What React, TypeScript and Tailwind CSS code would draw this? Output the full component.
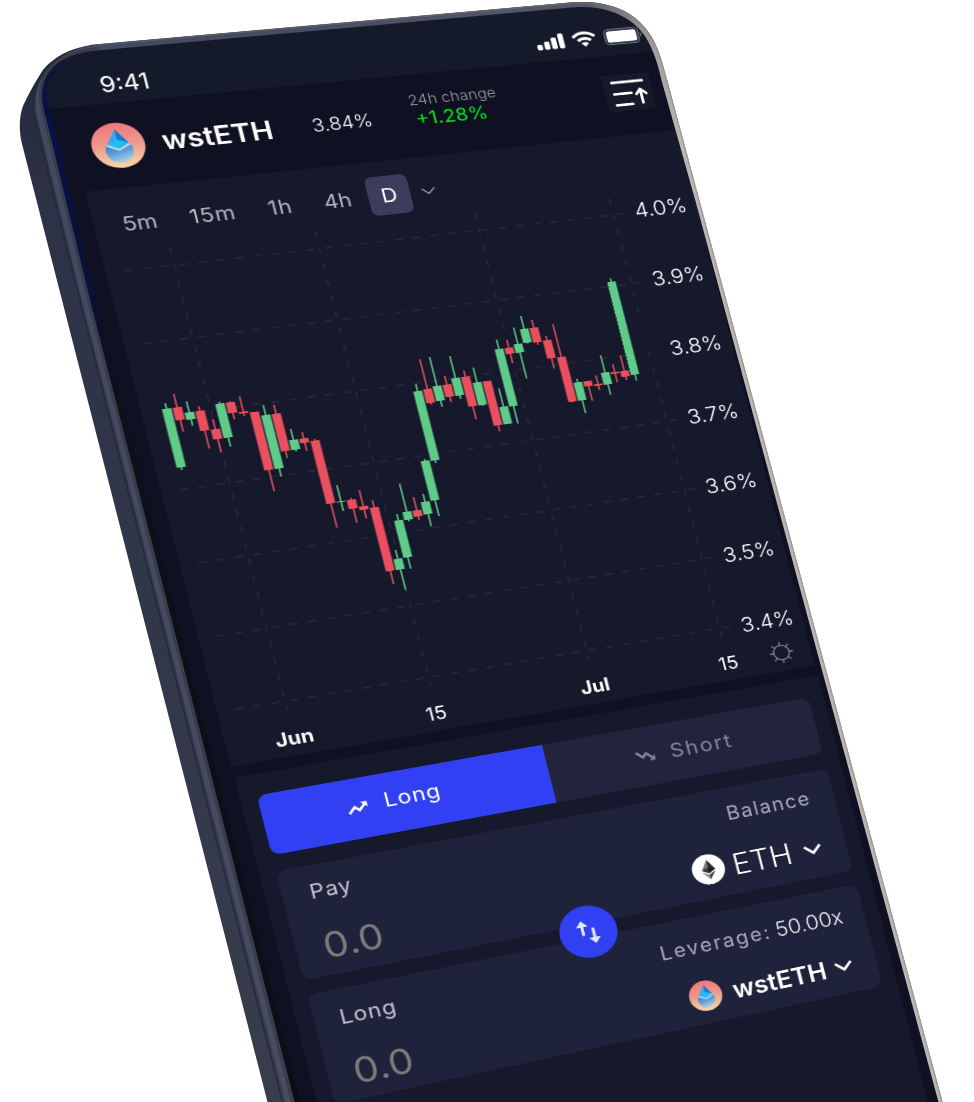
import React from "react";

type Point = [number, number];

/* The plot area in screen pixels, and where its four corners land once the phone is tilted. */
const PLOT = { x: 46, y: 248, width: 500, height: 486 };
const PLOT_CORNERS: Point[] = [
  [124, 271],
  [626, 213.5],
  [732, 626.3],
  [235, 709.5],
];

/* CSS transform that maps a width × height rectangle onto a quadrilateral. */
function perspectiveOnto([p0, p1, p2, p3]: Point[], width: number, height: number) {
  const dx1 = p1[0] - p2[0];
  const dx2 = p3[0] - p2[0];
  const dy1 = p1[1] - p2[1];
  const dy2 = p3[1] - p2[1];
  const sx = p0[0] - p1[0] + p2[0] - p3[0];
  const sy = p0[1] - p1[1] + p2[1] - p3[1];
  const det = dx1 * dy2 - dx2 * dy1;
  const g = (sx * dy2 - dx2 * sy) / det;
  const h = (dx1 * sy - sx * dy1) / det;
  const a = (p1[0] - p0[0] + g * p1[0]) / width;
  const b = (p3[0] - p0[0] + h * p3[0]) / height;
  const d = (p1[1] - p0[1] + g * p1[1]) / width;
  const e = (p3[1] - p0[1] + h * p3[1]) / height;
  return `matrix3d(${[a, d, 0, g / width, b, e, 0, h / height, 0, 0, 1, 0, p0[0], p0[1], 0, 1].join(",")})`;
}

const screenTransform = `${perspectiveOnto(PLOT_CORNERS, PLOT.width, PLOT.height)} translate(${-PLOT.x}px, ${-PLOT.y}px)`;

/* [direction, wick top, body top, body bottom, wick bottom] */
type Candle = ["up" | "down", number, number, number, number];
const candles: Candle[] = [
  ["up", 148, 154, 219, 222],
  ["down", 139, 154, 168, 181],
  ["up", 149, 161, 169, 176],
  ["down", 156, 161, 183, 203],
  ["down", 172, 183, 194, 209],
  ["up", 154, 156, 194, 204],
  ["down", 155, 156, 168, 175],
  ["down", 151, 168, 170, 173],
  ["down", 170, 170, 235, 259],
  ["up", 164, 175, 235, 244],
  ["down", 165, 175, 217, 225],
  ["up", 194, 206, 217, 219],
  ["down", 199, 206, 211, 220],
  ["down", 208, 210, 281, 308],
  ["up", 262, 280, 281, 291],
  ["down", 278, 280, 290, 306],
  ["down", 271, 289, 293, 303],
  ["down", 284, 292, 364, 379],
  ["up", 342, 352, 364, 387],
  ["up", 303, 310, 352, 365],
  ["up", 270, 302, 311, 313],
  ["down", 287, 302, 309, 313],
  ["up", 285, 294, 308, 322],
  ["up", 247, 249, 294, 312],
  ["up", 163, 171, 250, 253],
  ["down", 136, 170, 186, 188],
  ["up", 135, 168, 185, 192],
  ["down", 158, 168, 182, 188],
  ["up", 137, 162, 182, 186],
  ["down", 155, 162, 196, 211],
  ["up", 153, 170, 196, 197],
  ["down", 170, 170, 221, 228],
  ["up", 180, 201, 221, 221],
  ["up", 125, 136, 202, 222],
  ["down", 127, 136, 143, 154],
  ["up", 114, 133, 143, 173],
  ["up", 102, 117, 133, 134],
  ["down", 108, 117, 134, 137],
  ["down", 128, 133, 154, 166],
  ["down", 116, 154, 206, 207],
  ["up", 181, 185, 206, 221],
  ["down", 185, 185, 191, 208],
  ["down", 180, 190, 192, 197],
  ["up", 158, 178, 192, 204],
  ["down", 170, 179, 181, 191],
  ["down", 161, 179, 186, 190],
  ["up", 72, 76, 185, 192],
];

const rates = ["4.0%", "3.9%", "3.8%", "3.7%", "3.6%", "3.5%", "3.4%"];

function DeviceBody() {
  return (
    <svg className="absolute inset-0" width="974" height="1102" viewBox="0 0 974 1102" fill="none">
      <defs>
        <linearGradient id="side" x1="0" y1="60" x2="0" y2="1102" gradientUnits="userSpaceOnUse">
          <stop offset="0" stopColor="#25293b" />
          <stop offset="0.15" stopColor="#2d3246" />
          <stop offset="0.5" stopColor="#31374a" />
          <stop offset="1" stopColor="#383d4d" />
        </linearGradient>
        <linearGradient id="rim" x1="60" y1="0" x2="680" y2="0" gradientUnits="userSpaceOnUse">
          <stop offset="0" stopColor="#434960" />
          <stop offset="0.3" stopColor="#454b61" />
          <stop offset="0.85" stopColor="#55586a" />
          <stop offset="0.94" stopColor="#96948f" />
          <stop offset="1" stopColor="#bbb8b4" />
        </linearGradient>
        <linearGradient id="outline" x1="60" y1="0" x2="680" y2="0" gradientUnits="userSpaceOnUse">
          <stop offset="0" stopColor="#5b5e69" stopOpacity="0.6" />
          <stop offset="0.85" stopColor="#66676c" />
          <stop offset="1" stopColor="#a09e9b" />
        </linearGradient>
      </defs>
      <path
        d="M268 1104L21.5 142C19 130 19 117 23 106C28 95 34 84 41 73C50 59 70 47 97 44.3L566 3C590 0.500 607 3 624 11C641 20 650 32 657 48C662 60 664 70 667 80L700 203L943 1104Z"
        fill="url(#side)"
      />
      <path
        d="M286 1104L81 297L36.500 116C34 100 35 88 44 75C53 60 73 47.500 97 44.600L566 3C590 0.500 607 3 624 11C641 20 650 32 657 48C662 60 664 70 667 80L700 203L943 1104Z"
        fill="url(#rim)"
      />
      <path d="M283 1104L79 297L34 116C32 100 33 88 42 75" stroke="#262a3a" strokeWidth="1.500" />
      <path d="M293 1104L88 298L45 120C40 104 39 94 42 84C47 69 60 54 97 48" stroke="#3a3d48" strokeWidth="3" />
      <path
        d="M97 45L566 3.500C590 1 607 3.500 624 11.500C641 20.500 650 32.500 656.500 48C661.500 60 663.500 70 666.500 80L699.500 203L942.500 1104"
        stroke="url(#outline)"
        strokeWidth="1.500"
      />
    </svg>
  );
}

function GlassEdge() {
  return (
    <svg className="absolute inset-0" width="974" height="1102" viewBox="0 0 974 1102" fill="none">
      <defs>
        <linearGradient id="glint" x1="0" y1="60" x2="0" y2="1102" gradientUnits="userSpaceOnUse">
          <stop offset="0" stopColor="#0a1140" stopOpacity="0.300" />
          <stop offset="0.06" stopColor="#08104a" />
          <stop offset="0.22" stopColor="#0a1038" />
          <stop offset="0.33" stopColor="#0d0f1a" />
          <stop offset="1" stopColor="#0c0e16" />
        </linearGradient>
      </defs>
      <path d="M295 1104L90 300L46.500 120C42 105 41 95 43 86C45 77 50 68 58 61" stroke="url(#glint)" strokeWidth="11" />
    </svg>
  );
}

function LidoLogo({ className, id }: { className: string; id: string }) {
  return (
    <svg className={className} viewBox="0 0 50 50">
      <defs>
        <linearGradient id={`${id}-bg`} x1="0" y1="0" x2="0" y2="1">
          <stop offset="0.050" stopColor="#ee7c7e" />
          <stop offset="0.500" stopColor="#ee9a8c" />
          <stop offset="1" stopColor="#f8d9a8" />
        </linearGradient>
        <linearGradient id={`${id}-drop`} x1="0" y1="0" x2="0.300" y2="1">
          <stop offset="0" stopColor="#2f7fd0" />
          <stop offset="0.500" stopColor="#5d9fdb" />
          <stop offset="1" stopColor="#a9cbe4" />
        </linearGradient>
      </defs>
      <circle cx="25" cy="25" r="25" fill={`url(#${id}-bg)`} />
      <path d="M13.200 25C10 33 14 44 25 44C36 44 40 33 36.800 25L25 31Z" fill={`url(#${id}-drop)`} />
      <path d="M25 7L15 23L25 28.500Z" fill="#35a8f0" />
      <path d="M25 7L35 23L25 28.500Z" fill="#1478cc" />
      <path d="M15 23L25 18.500L35 23L25 28.500Z" fill="#22bdf5" />
      <path d="M14.600 23.600L25 29L35.400 23.600L36.300 25.200L25 31L13.700 25.200Z" fill="#a8e4fb" />
    </svg>
  );
}

function EthLogo() {
  return (
    <svg className="-mt-[2px] size-[34px]" viewBox="0 0 34 34">
      <circle cx="17" cy="17" r="17" fill="#fff" />
      <path d="M17 6L10 17.500L17 21.500Z" fill="#77777a" />
      <path d="M17 6L24 17.500L17 21.500Z" fill="#2c2c30" />
      <path d="M17 14.500L10 17.500L17 21.500L24 17.500Z" fill="#18181b" fillOpacity="0.650" />
      <path d="M10 19.300L17 23.300V28.500Z" fill="#8b8b8e" />
      <path d="M24 19.300L17 23.300V28.500Z" fill="#3b3b3f" />
    </svg>
  );
}

function Chevron({ className }: { className: string }) {
  return (
    <svg className={className} viewBox="0 0 20 12" fill="none" stroke="currentColor">
      <path d="M1.500 1.500L10 9.500L18.500 1.500" />
    </svg>
  );
}

function TrendIcon({ className }: { className: string }) {
  return (
    <svg className={className} viewBox="0 0 20 13" fill="none" stroke="currentColor" strokeWidth="2.600">
      <path d="M1 11.500L7.200 5.200L11.200 9.200L17.500 2.800" />
      <path d="M13.200 0.500H19.500V6.800Z" fill="currentColor" stroke="none" />
    </svg>
  );
}

function StatusBar() {
  return (
    <div className="flex h-16 items-center bg-[#151a2a] pt-5 pl-[67px] text-white">
      <span className="w-[432px] pt-[3px] text-[24px] leading-none">9:41</span>
      <svg className="h-[18px] w-[30px]" viewBox="0 0 30 18" fill="currentColor">
        <rect x="0" y="11" width="5.600" height="6.500" rx="1.800" />
        <rect x="7.700" y="8" width="5.600" height="9.500" rx="1.800" />
        <rect x="15.400" y="4" width="5.600" height="13.500" rx="1.800" />
        <rect x="23.100" y="0" width="5.600" height="17.500" rx="1.800" />
      </svg>
      <svg className="ml-[7px] h-[18px] w-[26px]" viewBox="0 0 26 18" fill="none" stroke="currentColor" strokeWidth="3.300">
        <path d="M1.500 6.500C8 0.200 18 0.200 24.500 6.500" />
        <path d="M6.200 11C10 7.400 16 7.400 19.800 11" />
        <path d="M9.200 14.200C11.300 12.300 14.700 12.300 16.800 14.200L13 18Z" fill="currentColor" stroke="none" />
      </svg>
      <svg className="ml-2 h-[19px] w-[41px]" viewBox="0 0 41 19" fill="none">
        <rect x="0.700" y="0.700" width="35.600" height="17.600" rx="4.500" stroke="#6f727d" strokeWidth="1.300" />
        <rect x="2.700" y="2.700" width="31.600" height="13.600" rx="3" fill="#fff" />
        <path d="M38 6.500C40 7.500 40 11.500 38 12.500Z" fill="#6f727d" />
      </svg>
    </div>
  );
}

function Header() {
  return (
    <header className="grid h-[94px] grid-cols-[66.5px_145px_99.5px_91px_1fr] items-center pl-[45px] leading-none">
      <LidoLogo id="header-logo" className="size-[50px]" />
      <span className="text-[28.3px] font-semibold text-white">wstETH</span>
      <span className="pt-px text-[19.8px] font-light text-white">3.84%</span>
      <div className="-mt-[14px] text-center">
        <div className="h-[22px] pr-0.5 text-[16px] leading-[22px] font-light whitespace-nowrap text-[#9a9aa3]">24h change</div>
        <div className="h-[22px] pr-3 text-[20.5px] leading-[22px] text-[#00e61b]">+1.28%</div>
      </div>
      <div className="-mt-[5px] ml-[109px] h-[43px] w-[50px] bg-[#141a29]">
        <svg className="size-full text-white" viewBox="0 0 50 43" fill="none" stroke="currentColor" strokeWidth="3" strokeLinecap="round" strokeLinejoin="round">
          <path d="M9.500 9H41.500M9.500 22.500H27.500M9.500 35.500H26.500M37.500 35V19M32.500 24.500L37.500 19L43 24.500" />
        </svg>
      </div>
    </header>
  );
}

function CandleChart() {
  return (
    <svg className="h-[528px] w-[524px] shrink-0" viewBox="-17 -29 524 528">
      <g stroke="#292b3c" strokeWidth="1.400">
        {rates.map((rate, i) => (
          <path key={rate} d={`M0 ${i * 81}H${rate === "3.8%" ? 470 : 508}`} strokeDasharray="8 9.500" />
        ))}
        {[47.5, 187.5, 347.5].map((x) => (
          <path key={x} d={`M${x} -20V497`} strokeDasharray="7.500 10.800" />
        ))}
        <path d="M487 -20V116M487 160V497" strokeDasharray="7.500 10.800" />
      </g>
      {candles.map(([direction, wickTop, bodyTop, bodyBottom, wickBottom], i) => {
        const x = 7 + i * 10;
        return (
          <g key={i} fill={direction === "up" ? "#5fcb89" : "#e94f5e"}>
            <rect x={x - 0.75} y={wickTop} width="1.500" height={wickBottom - wickTop} />
            <rect x={x - 4.4} y={bodyTop} width="8.800" height={bodyBottom - bodyTop} />
          </g>
        );
      })}
    </svg>
  );
}

function ChartPanel() {
  return (
    <section className="ml-[29px] h-[636px] w-[592px] bg-[#16182b] pt-[17px]">
      <div className="grid h-11 grid-cols-[63.5px_75.5px_54.5px_44px_42px_40px] items-center pl-[26.5px] text-[22px] text-[#b2b4be]">
        <span>5m</span>
        <span className="tracking-[0.8px]">15m</span>
        <span className="tracking-[0.8px]">1h</span>
        <span>4h</span>
        <span className="flex h-full items-center justify-center rounded-[7px] bg-[#3c3d5d] text-white">D</span>
        <Chevron className="ml-[11px] h-[9px] w-[15px] stroke-[1.7]" />
      </div>
      <div className="flex">
        <CandleChart />
        <div className="-mt-[14px] pl-[2.5px] text-[23px] font-light text-white">
          {rates.map((rate) => (
            <div key={rate} className="flex h-[81.5px] items-center">
              {rate}
            </div>
          ))}
        </div>
      </div>
      <div className="mt-[-16px] grid h-7 grid-cols-[146.5px_156px_144.5px_54.5px_26px] items-center pl-[46.5px] text-[20px] text-white">
        <span className="font-bold">Jun</span>
        <span>15</span>
        <span className="font-bold">Jul</span>
        <span>15</span>
        <svg className="-mt-1 size-[26px] text-[#8b8c96]" viewBox="0 0 26 26" fill="none" stroke="currentColor" strokeWidth="1.300" strokeLinecap="round">
          <circle cx="13" cy="13" r="8.300" />
          <path d="M13 4.500V1.200M13 21.500V24.800M4.500 13H1.200M21.500 13H24.800M7 7L4.600 4.600M19 19L21.400 21.400M7 19L4.600 21.400M19 7L21.400 4.600" />
        </svg>
      </div>
    </section>
  );
}

type OrderCardProps = { className: string; label: string; detail: React.ReactNode; token: React.ReactNode };

function OrderCard({ className, label, detail, token }: OrderCardProps) {
  return (
    <div className={`flex h-[120px] justify-between rounded-[9px] bg-[#1f223b] pr-6 ${className}`}>
      <div>
        <div className="mt-4 h-6 text-[21.5px] leading-6 tracking-[0.9px] text-[#c2c3cc]">{label}</div>
        <div className="mt-7 h-10 text-[38px] leading-10 tracking-[0.3px] text-[#7e7c79]">0.0</div>
      </div>
      <div className="flex flex-col items-end">
        <div className="mt-[17.5px] h-6 text-[21px] leading-6 text-[#a9aab5]">{detail}</div>
        <div className="mt-[29px] flex h-[34px] items-center text-white">{token}</div>
      </div>
    </div>
  );
}

function OrderPanel() {
  return (
    <section className="mt-3 ml-[30px] h-[760px] w-[592px] bg-[#16182b] px-[16px] pt-[23px]">
      <div className="grid h-[65.5px] grid-cols-2 overflow-hidden rounded-[9px] text-[22px]">
        <div className="flex items-center bg-[#3140f2] pl-[80px] text-white">
          <TrendIcon className="mr-[16px] h-[13px] w-5" />
          <span className="-mt-[6px] tracking-[0.9px]">Long</span>
        </div>
        <div className="flex items-center bg-[#21243c] pl-[89px] text-[#858793]">
          <TrendIcon className="mr-[16px] h-[13px] w-5 -scale-y-100" />
          <span className="-mt-[1px] tracking-[1.9px]">Short</span>
        </div>
      </div>
      <div className="relative mt-[18.5px] flex flex-col gap-4">
        <OrderCard
          className="pl-[26px]"
          label="Pay"
          detail={<span className="mr-px tracking-[1.5px]">Balance</span>}
          token={
            <>
              <EthLogo />
              <span className="ml-[8px] text-[32px] leading-none font-light">ETH</span>
              <Chevron className="mr-[2px] ml-[12.5px] h-3 w-5 stroke-[3]" />
            </>
          }
        />
        <OrderCard
          className="pt-[1.5px] pl-[24.5px]"
          label="Long"
          detail={
            <div className="pt-[1.5px]">
              <span className="tracking-[2px]">Leverage:</span>
              <span className="-mr-px ml-[5px] text-[22.5px] font-light text-[#f0f0f2]">50.00x</span>
            </div>
          }
          token={
            <>
              <LidoLogo id="order-logo" className="size-[34px]" />
              <span className="ml-[11px] text-[26.5px] leading-none font-semibold">wstETH</span>
              <Chevron className="mr-px ml-[9px] h-3 w-5 stroke-[3]" />
            </>
          }
        />
        <button className="absolute top-[100px] left-[250px] flex size-[58px] items-center justify-center rounded-full bg-[#3140f2] text-[#e3e5ff]">
          <svg className="size-[30px]" viewBox="-15 -15 30 30" stroke="currentColor" strokeWidth="3" fill="none">
            <path d="M-5.500 3.500V-9M5 -3.500V10" />
            <path d="M-11.500 -6L-5.500 -13L0.500 -6ZM-1 7L5 14L11 7Z" fill="currentColor" stroke="none" />
          </svg>
        </button>
      </div>
    </section>
  );
}

export default function App() {
  return (
    <main className="relative h-[1102px] w-[974px] overflow-hidden bg-white font-[Inter,'Liberation_Sans',sans-serif]">
      <DeviceBody />
      <div className="absolute inset-0 overflow-hidden [clip-path:path('M295_1104L90_300L46.5_120C42_105_41_95_43_86C46_72_58_54_97_50.5L566_8C590_5.500_604_8_620_15C638_24_647_36_653_52C658_64_660_74_662_82L696_203L939_1104Z')]">
        <div className="h-[1330px] w-[660px] origin-top-left bg-[#0f1021]" style={{ transform: screenTransform }}>
          <StatusBar />
          <Header />
          <ChartPanel />
          <OrderPanel />
        </div>
        <GlassEdge />
      </div>
    </main>
  );
}
